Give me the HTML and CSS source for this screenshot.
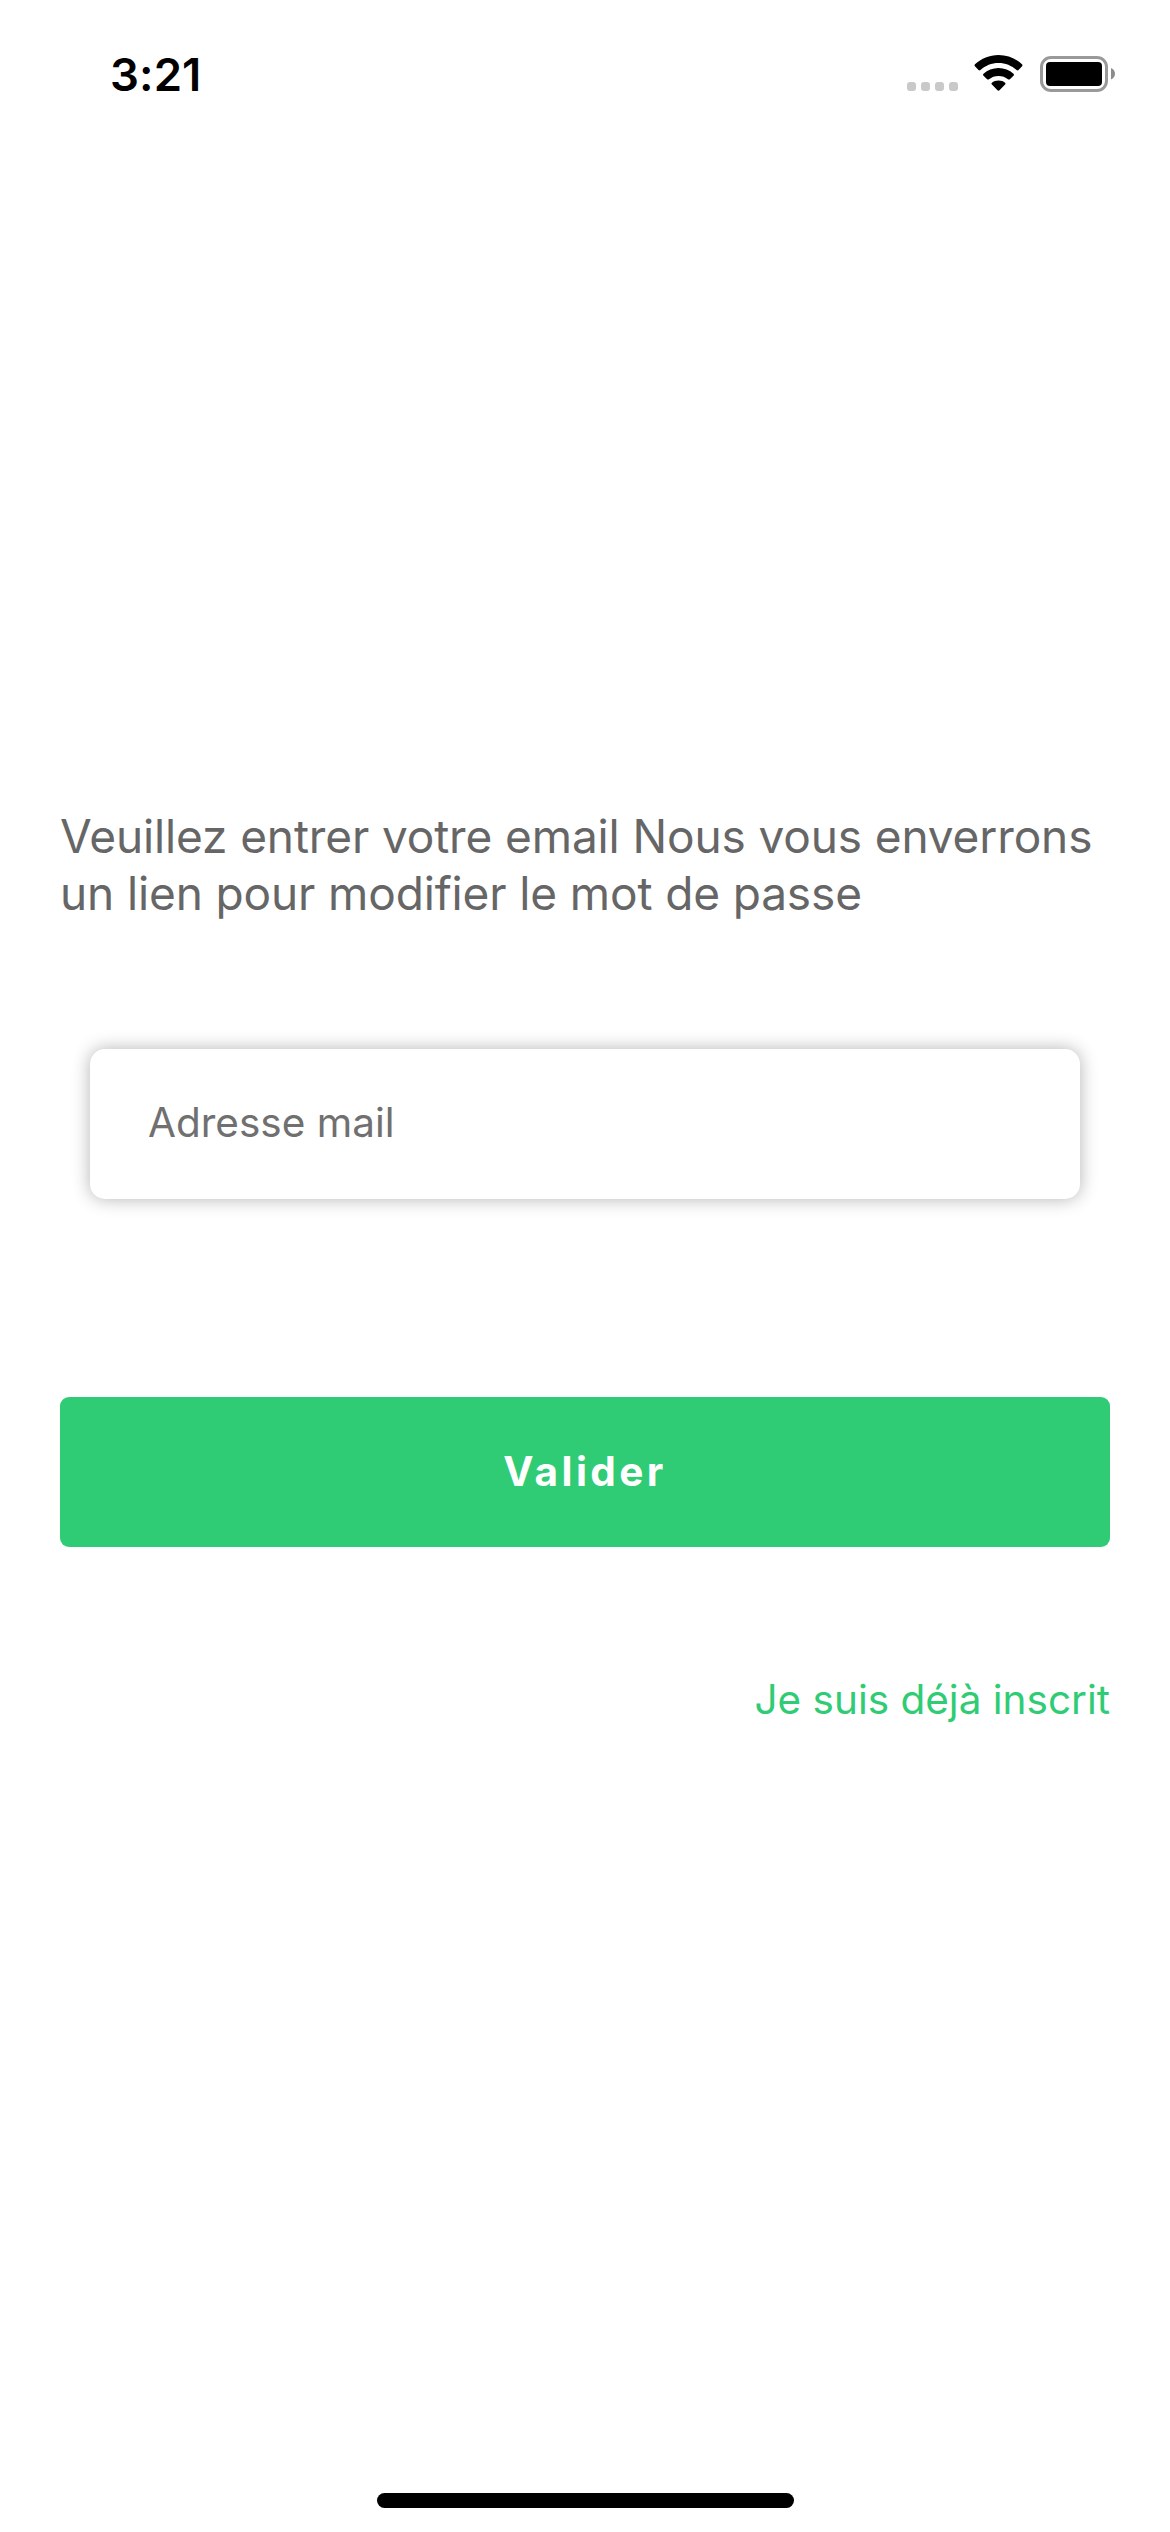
FILE: index.html
```html
<!DOCTYPE html>
<html lang="fr">
<head>
<meta charset="utf-8">
<title>Mot de passe oublié</title>
<link rel="stylesheet" href="styles.css">
</head>
<body>
<div class="screen">
  <header class="status-bar">
    <span class="time">3:21</span>
    <div class="indicators">
      <svg class="signal" width="51" height="9" viewBox="0 0 51 9"><rect width="9" height="9" rx="3"/><rect x="14" width="9" height="9" rx="3"/><rect x="28" width="9" height="9" rx="3"/><rect x="42" width="9" height="9" rx="3"/></svg>
      <svg class="wifi" width="49" height="36" viewBox="0 0 49 36">
        <path d="M24.500 0C33.500 0 41.700 3.500 48 9.300C48.600 9.900 48.600 10.700 48.100 11.300L44.500 15C43.900 15.500 43.200 15.500 42.600 15C37.700 10.500 31.400 7.900 24.500 7.900S11.300 10.500 6.400 15C5.800 15.500 5.100 15.500 4.500 15L.9 11.300C.4 10.700 .4 9.900 1 9.300C7.300 3.500 15.500 0 24.500 0Z"/>
        <path d="M24.500 13C30.300 13 35.500 15.200 39.500 18.700C40.100 19.300 40.100 20.100 39.500 20.700L35.900 24.200C35.300 24.700 34.600 24.700 34 24.200C31.400 22.100 28.200 20.900 24.500 20.900S17.600 22.100 15 24.200C14.400 24.700 13.700 24.700 13.100 24.200L9.500 20.700C8.900 20.100 8.900 19.300 9.500 18.700C13.500 15.200 18.700 13 24.500 13Z"/>
        <path d="M24.500 25.500C27.200 25.500 29.400 26.300 31.100 27.800C31.700 28.300 31.700 29 31.100 29.600L25.500 35.300C24.900 35.900 24.100 35.900 23.500 35.300L17.900 29.600C17.300 29 17.300 28.300 17.900 27.800C19.600 26.300 21.800 25.500 24.500 25.500Z"/>
      </svg>
      <svg class="battery" width="75" height="36" viewBox="0 0 75 36">
        <rect x="1.500" y="1.500" width="65" height="33" rx="9.500" fill="none" stroke="#999" stroke-width="3"/>
        <rect x="6" y="6" width="56" height="24" rx="4"/>
        <path d="M71 12C73.500 13 75 15.200 75 17.800S73.500 22.600 71 23.600Z" fill="#8c8c8c"/>
      </svg>
    </div>
  </header>
  <main class="content">
    <p class="intro">Veuillez entrer votre email Nous vous enverrons<br>un lien pour modifier le mot de passe</p>
    <input class="email" type="email" placeholder="Adresse mail">
    <button class="submit" type="button">Valider</button>
    <a class="login">Je suis déjà inscrit</a>
  </main>
  <div class="home-indicator"></div>
</div>
</body>
</html>
```

FILE: styles.css
```css
* { box-sizing: border-box; }
body { margin: 0; background: #fff; font-family: Inter, "Liberation Sans", sans-serif; }
.screen { display: flex; flex-direction: column; width: 1170px; height: 2532px; padding-bottom: 24px; background: #fff; }
.status-bar { display: flex; justify-content: space-between; align-items: flex-start; height: 141px; padding: 45px 55px 0 110px; }
.time { font-size: 45.500px; line-height: 59px; font-weight: 600; letter-spacing: 0.1px; }
.indicators { display: flex; align-items: flex-end; height: 46px; }
.indicators svg { display: block; }
.signal { fill: #c9c9c9; }
.wifi { margin-left: 16px; }
.battery { margin: 0 0 -1px 17px; }
.content { display: flex; flex-direction: column; flex: 1; padding: 667px 60px 0; }
.intro { margin: 0; font-size: 46px; line-height: 57px; letter-spacing: -0.13px; color: #666; white-space: nowrap; }
.email { height: 150px; margin: 127px 30px 0; padding: 0 58px 3px; border: 0; border-radius: 15px; outline: 0; background: #fff; font: 40.500px/52px Inter, "Liberation Sans", sans-serif; box-shadow: 0 0 18px rgba(0, 0, 0, .3); }
.email::placeholder { color: #707070; opacity: 1; }
.submit { height: 150px; margin-top: 198px; padding: 0; border: 0; border-radius: 9px; background: #30cc75; color: #fff; font: 700 40.500px/52px Inter, "Liberation Sans", sans-serif; letter-spacing: 3.400px; }
.login { align-self: flex-end; margin-top: 127px; font-size: 40.500px; line-height: 52px; color: #30cc75; }
.home-indicator { align-self: center; width: 417px; height: 15px; border-radius: 8px; background: #000; }
```
